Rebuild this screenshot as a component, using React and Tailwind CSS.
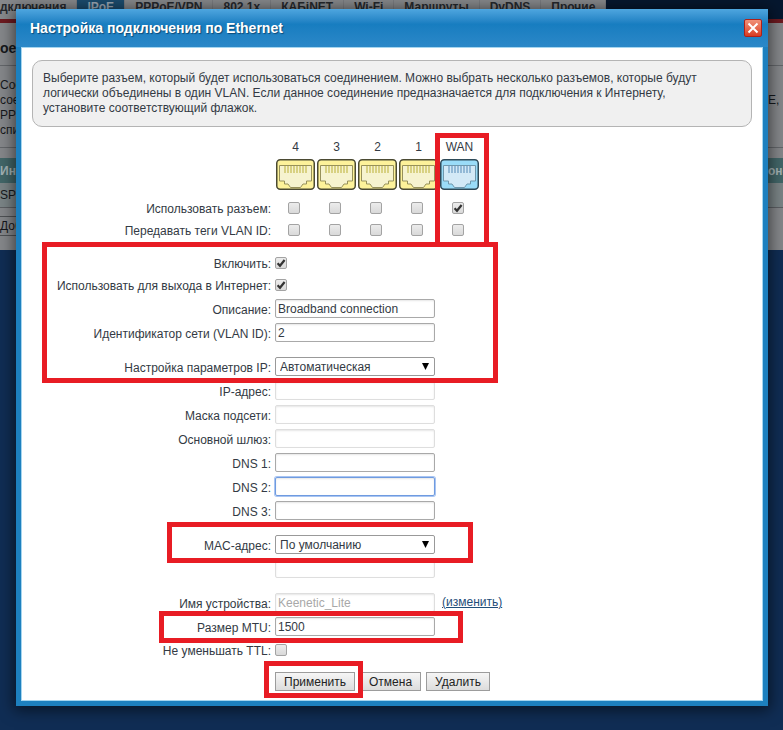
import { useState } from 'react';

const tabs = ['дключения', 'IPoE', 'PPPoE/VPN', '802.1x', 'КАБiNET', 'Wi-Fi', 'Маршруты', 'DyDNS', 'Прочие'];
const ports = ['4', '3', '2', '1', 'WAN'];

// Red marker frame, laid over the group it belongs to
function Marker({ className }) {
  return <span aria-hidden="true" className={`pointer-events-none absolute z-10 border-5 border-[#e81c24] ${className}`} />;
}

function PortIcon({ wan }) {
  return (
    <svg width="39" height="31" viewBox="0 0 39 31" aria-hidden="true">
      <rect x="0.75" y="0.75" width="37.5" height="29.5" rx="3.5" fill={wan ? '#9adcf8' : '#fdf29a'} stroke={wan ? '#2f4a58' : '#4b4a33'} strokeWidth="1.5" />
      <path
        d="M3.5 6.5h32v15.5h-5v3h-3.5l-2.5 3.5h-10l-2.5-3.5H8.5v-3h-5z"
        fill={wan ? '#d3e9f6' : '#f6f3cf'}
        stroke={wan ? '#6f97ac' : '#97915a'}
      />
      <path
        d="M9 7v7M12 7v7M15 7v7M18 7v7M21 7v7M24 7v7M27 7v7M30 7v7"
        stroke={wan ? '#93b9d6' : '#d8d182'}
        strokeWidth="2"
      />
    </svg>
  );
}

function Check(props) {
  return (
    <span className="relative block size-3">
      <input
        type="checkbox"
        className="peer block size-3 appearance-none rounded-xs border border-[#a3a3a3] bg-linear-to-b from-[#ececec] to-[#d9d9d9]"
        {...props}
      />
      <svg viewBox="0 0 12 12" className="pointer-events-none invisible absolute inset-0 size-3 peer-checked:visible" aria-hidden="true">
        <path d="M2.6 6.2l2.4 2.6L9.6 3" fill="none" stroke="#333" strokeWidth="2.2" />
      </svg>
    </span>
  );
}

function Row({ id, label, check, children }) {
  return (
    <div className={`grid grid-cols-[239px_1fr] items-center gap-x-1 ${check ? 'h-[22px]' : 'h-6 pb-px'}`}>
      <label htmlFor={id} className={`text-right whitespace-nowrap ${check ? 'pt-0.5' : 'pt-1'}`}>{label}</label>
      <div className="flex items-center gap-[7px]">{children}</div>
    </div>
  );
}

function PortChecks({ name, label, value, onChange }) {
  return (
    <Row id={`${name}-4`} label={`${label}:`} check>
      <div className="flex">
        {ports.map((p) => (
          <div key={p} className="flex w-[41px] justify-center pr-[3px]">
            <Check
              id={`${name}-${p}`}
              aria-label={`${label} ${p}`}
              checked={!!value[p]}
              onChange={(e) => onChange({ ...value, [p]: e.target.checked })}
            />
          </div>
        ))}
      </div>
    </Row>
  );
}

function TextBox({ focused, ...props }) {
  return (
    <input
      type="text"
      className={`h-[19px] w-40 rounded-xs border px-0.5 text-xs shadow-[inset_0_1px_2px_#0000001a] outline-none disabled:border-[#dedede] disabled:text-[#a8a8a8] ${
        focused ? 'border-[#6f9be0] ring-1 ring-[#a9c5f2]' : 'border-[#a9a9a9]'
      }`}
      {...props}
    />
  );
}

function Select({ id, options }) {
  return (
    <span className="relative block h-[19px] w-40">
      <select id={id} className="block h-[19px] w-40 appearance-none rounded-xs border border-[#999] bg-white px-1 text-xs">
        {options.map((o) => <option key={o}>{o}</option>)}
      </select>
      <svg viewBox="0 0 7 7" className="pointer-events-none absolute top-1.5 right-1.5 size-[7px]" aria-hidden="true">
        <path d="M0 0h7L3.5 7z" fill="#000" />
      </svg>
    </span>
  );
}

function Button({ children }) {
  return (
    <button type="button" className="h-[19px] border border-[#9c9c9c] bg-linear-to-b from-[#f6f6f6] to-[#dcdcdc] px-2 text-xs text-[#222]">
      {children}
    </button>
  );
}

function RouterPage() {
  return (
    <div className="overflow-hidden text-xs text-[#15181c]">
      <nav className="flex h-[19px] bg-[#06172f] leading-[15px] font-bold">
        {tabs.map((t) => (
          <a
            key={t}
            href="#"
            className={`shrink-0 border-r border-[#7a7c80] px-2.5 first:pl-0 ${t === 'IPoE' ? 'bg-[#1b4c6e] text-[#9aa7b3]' : 'bg-[#87898c] text-[#25282c]'}`}
          >
            {t}
          </a>
        ))}
      </nav>
      <div className="h-[231px] border-t-4 border-[#6d1a20] bg-[#85878a] pt-4">
        <h1 className="h-[27px] border-b border-[#63666a] text-sm leading-[18px] font-bold">ое</h1>
        <div className="flex h-[82px] justify-between border-b border-[#63666a] pt-3 leading-[15px]">
          <p>Сое<br />сое<br />PPT<br />спи</p>
          <p className="w-[15px] pt-[15px]">E,</p>
        </div>
        <div className="mt-2.5 flex h-[25px] items-center justify-between bg-[#426668] font-bold text-[#a3b2b4]">
          <span>Инте</span>
          <span className="w-[15px]">оне</span>
        </div>
        <div className="flex h-[25px] items-center border-b border-[#5c5f63] bg-[#7a8486]">SP</div>
        <button type="button" className="mt-2 block h-5 border border-l-0 border-[#4e5154]">Доб</button>
      </div>
    </div>
  );
}

export default function App() {
  const [used, setUsed] = useState({ WAN: true });
  const [tagged, setTagged] = useState({});

  return (
    <div className="relative min-h-screen bg-[#102d54] font-['Liberation_Sans',Arial,sans-serif]">
      <RouterPage />

      <section
        role="dialog"
        aria-labelledby="title"
        className="absolute top-[9px] right-[15px] left-4 bg-[#1d80bf] px-[5px] pb-[5px] text-xs leading-[15px] text-[#333a44] shadow-[0_2px_14px_2px_#00000090]"
      >
        <header className="-mx-[5px] flex h-[38px] items-center justify-between bg-linear-to-b from-[#4ea6df] via-[#177dc0] via-40% to-[#2b88c8] pr-1.5 pl-3.5">
          <h2 id="title" className="text-sm font-bold text-white [text-shadow:1px_1px_1px_#0b4a78]">Настройка подключения по Ethernet</h2>
          <button type="button" aria-label="Закрыть" className="flex size-[18px] items-center justify-center rounded-xs border border-[#b02018] bg-linear-to-b from-[#f09078] to-[#d83a20]">
            <svg viewBox="0 0 12 12" className="size-3" aria-hidden="true">
              <path d="M1.5 1.5l9 9M10.5 1.5l-9 9" stroke="#fff" strokeWidth="2" />
            </svg>
          </button>
        </header>

        <div className="border border-[#a5d5ef] bg-white px-2.5 pt-3 pb-[9px]">
          <p className="rounded-[10px] border border-[#b4b4b4] bg-[#f0f0f0] py-2.5 pr-6 pl-2.5">
            Выберите разъем, который будет использоваться соединением. Можно выбрать несколько разъемов, которые будут
            логически объединены в один VLAN. Если данное соединение предназначается для подключения к Интернету,
            установите соответствующий флажок.
          </p>

          <form>
            {/* Port picker */}
            <div className="relative mt-3">
              <div className="ml-[243px] flex pb-[7px]">
                {ports.map((p) => (
                  <div key={p} className="flex w-[41px] flex-col items-center gap-[3px] leading-[17px]">
                    <span>{p}</span>
                    <PortIcon wan={p === 'WAN'} />
                  </div>
                ))}
              </div>
              <PortChecks name="use" label="Использовать разъем" value={used} onChange={setUsed} />
              <PortChecks name="tag" label="Передавать теги VLAN ID" value={tagged} onChange={setTagged} />
              <Marker className="-top-1.5 -bottom-1.5 left-[403px] w-[54px]" />
            </div>

            {/* Connection */}
            <div className="relative mt-[11px]">
              <Row id="enable" label="Включить:" check><Check id="enable" defaultChecked /></Row>
              <Row id="inet" label="Использовать для выхода в Интернет:" check><Check id="inet" defaultChecked /></Row>
              <div className="pt-px pb-2.5">
                <Row id="descr" label="Описание:"><TextBox id="descr" defaultValue="Broadband connection" /></Row>
                <Row id="vlan" label="Идентификатор сети (VLAN ID):"><TextBox id="vlan" defaultValue="2" /></Row>
              </div>
              <Row id="ipmode" label="Настройка параметров IP:"><Select id="ipmode" options={['Автоматическая', 'Ручная']} /></Row>
              <Marker className="-top-2.5 -bottom-1 left-2.5 w-[456px]" />
            </div>

            {/* Addresses */}
            <div className="pb-2.5">
              <Row id="ip" label="IP-адрес:"><TextBox id="ip" disabled /></Row>
              <Row id="mask" label="Маска подсети:"><TextBox id="mask" disabled /></Row>
              <Row id="gw" label="Основной шлюз:"><TextBox id="gw" disabled /></Row>
              <Row id="dns1" label="DNS 1:"><TextBox id="dns1" /></Row>
              <Row id="dns2" label="DNS 2:"><TextBox id="dns2" focused /></Row>
              <Row id="dns3" label="DNS 3:"><TextBox id="dns3" /></Row>
            </div>

            <div className="relative">
              <Row id="mac" label="MAC-адрес:"><Select id="mac" options={['По умолчанию', 'Вручную']} /></Row>
              <Marker className="-top-[11px] -bottom-1.5 left-[135px] w-[306px]" />
            </div>
            <div className="pb-2.5">
              <Row id="macvalue"><TextBox id="macvalue" aria-label="MAC-адрес вручную" disabled /></Row>
            </div>

            <Row id="host" label="Имя устройства:">
              <TextBox id="host" defaultValue="Keenetic_Lite" disabled />
              <a href="#" className="text-[#1f4e79] underline">(изменить)</a>
            </Row>
            <div className="relative">
              <Row id="mtu" label="Размер MTU:"><TextBox id="mtu" defaultValue="1500" /></Row>
              <Marker className="-top-1 -bottom-1 left-[127px] w-[304px]" />
            </div>
            <Row id="ttl" label="Не уменьшать TTL:" check><Check id="ttl" /></Row>

            <div className="mt-[11px] ml-[243px] flex gap-[5px]">
              <span className="relative flex">
                <Button>Применить</Button>
                <Marker className="-top-[11px] -right-2 -bottom-[7px] -left-[11px]" />
              </span>
              <Button>Отмена</Button>
              <Button>Удалить</Button>
            </div>
          </form>
        </div>
      </section>
    </div>
  );
}
